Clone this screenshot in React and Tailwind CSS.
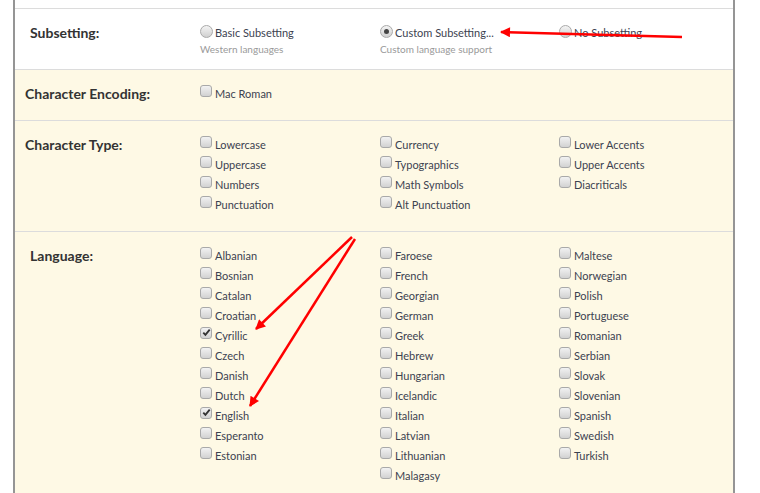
import React from "react";

const characterTypes = [
  ["Lowercase", "Uppercase", "Numbers", "Punctuation"],
  ["Currency", "Typographics", "Math Symbols", "Alt Punctuation"],
  ["Lower Accents", "Upper Accents", "Diacriticals"],
];

const languages = [
  ["Albanian", "Bosnian", "Catalan", "Croatian", "Cyrillic", "Czech", "Danish", "Dutch", "English", "Esperanto", "Estonian"],
  ["Faroese", "French", "Georgian", "German", "Greek", "Hebrew", "Hungarian", "Icelandic", "Italian", "Latvian", "Lithuanian", "Malagasy"],
  ["Maltese", "Norwegian", "Polish", "Portuguese", "Romanian", "Serbian", "Slovak", "Slovenian", "Spanish", "Swedish", "Turkish"],
];

const checked = ["Cyrillic", "English"];

const Box = ({ on }) => (
  <span className="relative mt-[-6px] inline-block h-[12px] w-[12px] shrink-0 rounded-[3px] border border-[#a9a9a9] bg-gradient-to-b from-[#f2f2f2] to-[#d2d2d2]">
    {on && (
      <svg viewBox="0 0 12 12" className="absolute left-[0px] top-[-1px] h-[11px] w-[11px]">
        <path d="M2.5 6.2 L4.8 8.6 L9.5 2.8" fill="none" stroke="#333" strokeWidth="2" />
      </svg>
    )}
  </span>
);

const Radio = ({ on }) => (
  <span className="relative mt-[-3px] flex h-[13px] w-[13px] shrink-0 items-center justify-center rounded-full border border-[#aaa] bg-gradient-to-b from-[#f4f4f4] to-[#d0d0d0]">
    {on && <span className="h-[5px] w-[5px] rounded-full bg-[#444]" />}
  </span>
);

const Option = ({ label }) => (
  <div className="flex h-[20px] items-center gap-[3px]">
    <Box on={checked.includes(label)} />
    <span>{label}</span>
  </div>
);

const Row = ({ label, pad, bg, children, last }) => (
  <div className={`flex ${bg} ${last ? "" : "border-b border-[#dcdcdc]"} pt-[14px] pb-[16px]`}>
    <div className={`w-[185px] shrink-0 ${pad} text-[14px] font-bold leading-[20px] text-[#333]`}>{label}</div>
    {children}
  </div>
);

const Columns = ({ cols }) => (
  <div className="grid w-[537px] grid-cols-[180px_179px_178px]">
    {cols.map((col, i) => (
      <div key={i}>
        {col.map((l) => (
          <Option key={l} label={l} />
        ))}
      </div>
    ))}
  </div>
);

export default function App() {
  return (
    <div className="relative h-[493px] overflow-hidden bg-white" style={{ fontFamily: "Lato, 'Liberation Sans', sans-serif" }}>
      <div className="ml-[13px] w-[722px] border-x-2 border-[#959595] text-[11px] text-[#3c4250]">
        <div className="h-[9px] border-b border-[#dcdcdc]" />

        <div className="flex border-b border-[#dcdcdc] bg-white pt-[14px] pb-[14px]">
          <div className="w-[185px] shrink-0 pl-[15px] text-[14px] font-bold leading-[20px] text-[#333]">Subsetting:</div>
          <div className="grid w-[537px] grid-cols-[180px_179px_178px]">
            <div>
              <div className="flex h-[20px] items-center gap-[2px]"><Radio /><span>Basic Subsetting</span></div>
              <div className="text-[10px] leading-[12px] text-[#9a9a9a]">Western languages</div>
            </div>
            <div>
              <div className="flex h-[20px] items-center gap-[2px]"><Radio on /><span>Custom Subsetting...</span></div>
              <div className="text-[10px] leading-[12px] text-[#9a9a9a]">Custom language support</div>
            </div>
            <div>
              <div className="flex h-[20px] items-center gap-[2px]"><Radio /><span>No Subsetting</span></div>
            </div>
          </div>
        </div>

        <Row label="Character Encoding:" pad="pl-[10px]" bg="bg-[#fef9e5]">
          <Columns cols={[["Mac Roman"]]} />
        </Row>

        <Row label="Character Type:" pad="pl-[10px]" bg="bg-[#fef9e5]">
          <Columns cols={characterTypes} />
        </Row>

        <Row label="Language:" pad="pl-[15px]" bg="bg-[#fef9e5]" last>
          <Columns cols={languages} />
        </Row>
      </div>

      <svg className="pointer-events-none absolute left-0 top-0" width="760" height="493">
        <defs>
          <marker id="head" viewBox="0 0 10 10" refX="9" refY="5" markerWidth="5" markerHeight="4" orient="auto" markerUnits="strokeWidth">
            <path d="M0 0 L10 5 L0 10 Z" fill="#f00" />
          </marker>
        </defs>
        <g stroke="#f00" strokeWidth="2.5" fill="none">
          <line x1="682" y1="37" x2="501" y2="32" markerEnd="url(#head)" />
          <line x1="352" y1="237" x2="256" y2="329" markerEnd="url(#head)" />
          <line x1="355" y1="239" x2="250" y2="406" markerEnd="url(#head)" />
        </g>
      </svg>
    </div>
  );
}
